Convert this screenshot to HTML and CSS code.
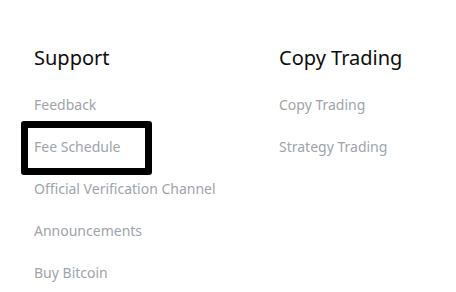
FILE: index.html
```html
<!DOCTYPE html>
<html>
<head>
<meta charset="utf-8">
<link rel="stylesheet" href="styles.css">
</head>
<body>
<div class="footer">
  <div class="col col-support">
    <h3 class="col-title">Support</h3>
    <ul class="links">
      <li><a class="link" href="#">Feedback</a></li>
      <li><a class="link highlighted" href="#">Fee Schedule</a></li>
      <li><a class="link" href="#">Official Verification Channel</a></li>
      <li><a class="link" href="#">Announcements</a></li>
      <li><a class="link" href="#">Buy Bitcoin</a></li>
    </ul>
  </div>
  <div class="col col-copy">
    <h3 class="col-title">Copy Trading</h3>
    <ul class="links">
      <li><a class="link" href="#">Copy Trading</a></li>
      <li><a class="link" href="#">Strategy Trading</a></li>
    </ul>
  </div>
</div>
</body>
</html>
```
FILE: styles.css
```css
html, body {
  margin: 0;
  padding: 0;
  background: #ffffff;
}
body {
  font-family: "Noto Sans", "Open Sans", sans-serif;
}
.footer {
  display: flex;
  padding: 44px 0 0 34px;
}
.col-support {
  width: 245px;
}
.col-title {
  margin: 0;
  font-size: 20px;
  line-height: 28px;
  font-weight: 400;
  color: #0d0d0d;
}
.links {
  list-style: none;
  margin: 22px 0 0;
  padding: 0;
  display: flex;
  flex-direction: column;
  gap: 22px;
}
.links li {
  line-height: 20px;
  height: 20px;
}
.link {
  position: relative;
  font-size: 14px;
  line-height: 20px;
  color: #a0a4ab;
  text-decoration: none;
  white-space: nowrap;
}
.highlighted::after {
  content: "";
  position: absolute;
  left: -13px;
  top: -16px;
  width: 117px;
  height: 40px;
  border: 7px solid #000000;
  border-radius: 3px;
}
```
